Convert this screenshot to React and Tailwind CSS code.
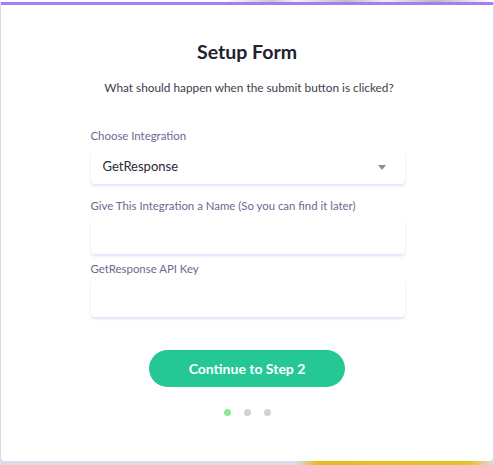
import React from "react";

const inputShadow = "shadow-[0_2px_3px_rgba(130,120,230,0.22)]";

const App = () => {
  return (
    <div
      className="w-[494px] h-[465px] overflow-hidden flex flex-col bg-[linear-gradient(90deg,#dcdbe6_0%,#dcdbe6_60%,#e2bd26_64%,#e6c22a_95%,#dcdbe6_100%)]"
      style={{ fontFamily: "Lato, 'Open Sans', sans-serif" }}
    >
      {/* blurred strip above the card */}
      <div className="h-[2px] bg-[linear-gradient(90deg,#ffffff_0%,#ffffff_45%,#c9c9c9_55%,#f2f2f2_60%,#bdbdbd_70%,#efefef_78%,#b9b9b9_88%,#ffffff_100%)]" />

      <div className="ml-[1px] w-[492px] h-[459px] bg-white border-t-[3px] border-[#a67cf6] rounded-b-[4px] flex flex-col items-center">
        <h1 className="mt-[35px] text-[19.5px] leading-[24px] font-bold text-[#22222e]">Setup Form</h1>
        <p className="mt-[16px] ml-[4px] text-[11.8px] leading-[16px] text-[#3d3d4c]">
          What should happen when the submit button is clicked?
        </p>

        <div className="mt-[32px] w-[314px] ml-[1px] flex flex-col">
          <label className="text-[11.4px] leading-[16px] text-[#6b6990]">Choose Integration</label>
          <div className={`mt-[6px] h-[34px] bg-white rounded-[4px] ${inputShadow} flex items-center justify-between pl-[12px] pr-[19px]`}>
            <span className="text-[13px] text-[#2a2a36]">GetResponse</span>
            <svg width="8" height="5" viewBox="0 0 8 5">
              <path d="M0 0h8L4 5z" fill="#8e8e96" />
            </svg>
          </div>

          <label className="mt-[14px] text-[11.4px] leading-[16px] text-[#6b6990]">
            Give This Integration a Name (So you can find it later)
          </label>
          <div className={`mt-[4px] h-[36px] bg-white rounded-[4px] ${inputShadow}`} />

          <label className="mt-[7px] text-[11.4px] leading-[16px] text-[#6b6990]">GetResponse API Key</label>
          <div className={`mt-[3px] h-[37px] bg-white rounded-[4px] ${inputShadow}`} />
        </div>

        <button className="mt-[33px] w-[196px] h-[37px] rounded-full bg-[#25c795] text-white text-[14px] font-bold">
          Continue to Step 2
        </button>

        <div className="mt-[22px] flex gap-[13px]">
          <span className="w-[7px] h-[7px] rounded-full bg-[#8de98b]" />
          <span className="w-[7px] h-[7px] rounded-full bg-[#d2d2d2]" />
          <span className="w-[7px] h-[7px] rounded-full bg-[#d2d2d2]" />
        </div>
      </div>
    </div>
  );
};

export default App;
